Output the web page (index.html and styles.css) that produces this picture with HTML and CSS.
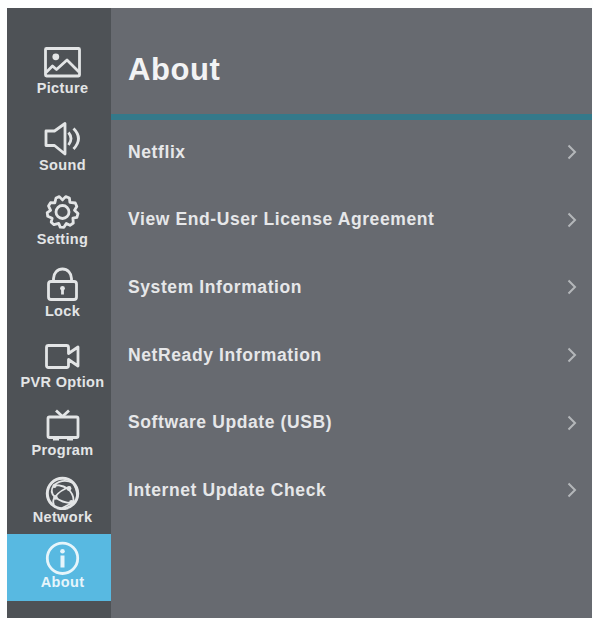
FILE: index.html
```html
<!DOCTYPE html>
<html lang="en">
<head>
<meta charset="utf-8">
<title>About</title>
<link rel="stylesheet" href="styles.css">
</head>
<body>
<div class="panel">
  <nav class="sidebar">
    <a class="item item-picture">
      <svg class="icon" viewBox="0 0 41 40"><rect x="3.500" y="7.500" width="34" height="27.500" rx="1"/><circle class="solid" cx="13.800" cy="15.800" r="3.400"/><path d="M4 31.500l6.500-6.500 4 3.500 10.500-9.500 12 12"/></svg>
      <span class="label">Picture</span>
    </a>
    <a class="item item-sound">
      <svg class="icon" viewBox="0 0 41 40"><path d="M4 13h8.500l10.500-7.500v30.500l-10.500-8.500H4z"/><path d="M26.500 14.500q5 6 0 12.500M31.500 10.500q10 10 0 20.500"/></svg>
      <span class="label">Sound</span>
    </a>
    <a class="item item-setting">
      <svg class="icon" viewBox="0 0 41 40"><circle cx="20.500" cy="20" r="6.500"/><path d="M17.300 4.600 L20.500 7.900 L23.700 4.600 L27.400 6 L27.900 10.300 L33.300 11 L34.800 14.500 L32.500 18.300 L36 21.600 L34.900 25.300 L30.900 26.200 L31.300 31 L28 33.300 L24.300 31.400 L21.900 35.300 L18.200 35.100 L16.700 31.400 L12 32.700 L9.200 30.200 L10.200 26.200 L5.700 24.300 L5.200 20.600 L8.600 18.300 L6.500 13.900 L8.500 10.700 L12.800 10.900 L14 6z"/></svg>
      <span class="label">Setting</span>
    </a>
    <a class="item item-lock">
      <svg class="icon" viewBox="0 0 41 40"><rect x="6.500" y="17.500" width="28" height="18" rx="2.500"/><path d="M11.500 17v-2.500a9 9.500 0 0 1 18 0v2.500"/><circle class="solid" cx="20.500" cy="24.300" r="2.400"/><path d="M20.500 24v6.500"/></svg>
      <span class="label">Lock</span>
    </a>
    <a class="item item-pvr">
      <svg class="icon" viewBox="0 0 41 40"><path d="M6.500 10.500h18q2 0 2 2v6l9.500-6.500v19l-9.500-6.500v6q0 2-2 2h-18q-2 0-2-2v-18q0-2 2-2z"/></svg>
      <span class="label">PVR Option</span>
    </a>
    <a class="item item-program">
      <svg class="icon" viewBox="0 0 41 40"><rect x="6" y="14" width="30" height="20.500" rx="1.500"/><path d="M14 7.500l6.500 6 6.500-6M11 36h6M25 36h6"/></svg>
      <span class="label">Program</span>
    </a>
    <a class="item item-network">
      <svg class="icon icon-fine" viewBox="0 0 41 40"><circle cx="20.500" cy="23.500" r="15.200" stroke-width="3"/><path d="M12 15Q21 8 31 13M12 15Q23 15 28 21Q33 27 31 34M12 15Q7 22 13 27Q20 33 30 33M28 17Q18 20 13 27Q10 31 12 35M31 13Q35 19 35 25M30 33Q24 36 20 38"/><circle class="solid" cx="12.500" cy="16" r="2"/><circle class="solid" cx="27" cy="18.500" r="2.400"/><circle class="solid" cx="13.500" cy="27.500" r="2.200"/><circle class="solid" cx="29.500" cy="32.500" r="2.400"/></svg>
      <span class="label">Network</span>
    </a>
    <a class="item item-about active">
      <svg class="icon" viewBox="0 0 41 40"><circle cx="20.500" cy="23.300" r="15.200"/><circle class="solid" cx="20.500" cy="16.200" r="2.300"/><path d="M20.500 20.500v12" stroke-width="4"/></svg>
      <span class="label">About</span>
    </a>
  </nav>
  <main class="content">
    <header class="header"><h1 class="title">About</h1></header>
    <ul class="list">
      <li class="row"><span>Netflix</span><svg class="chevron" viewBox="0 0 10 16"><path d="M1.500 1.500L8 8l-6.500 6.500"/></svg></li>
      <li class="row"><span>View End-User License Agreement</span><svg class="chevron" viewBox="0 0 10 16"><path d="M1.500 1.500L8 8l-6.500 6.500"/></svg></li>
      <li class="row"><span>System Information</span><svg class="chevron" viewBox="0 0 10 16"><path d="M1.500 1.500L8 8l-6.500 6.500"/></svg></li>
      <li class="row"><span>NetReady Information</span><svg class="chevron" viewBox="0 0 10 16"><path d="M1.500 1.500L8 8l-6.500 6.500"/></svg></li>
      <li class="row"><span>Software Update (USB)</span><svg class="chevron" viewBox="0 0 10 16"><path d="M1.500 1.500L8 8l-6.500 6.500"/></svg></li>
      <li class="row"><span>Internet Update Check</span><svg class="chevron" viewBox="0 0 10 16"><path d="M1.500 1.500L8 8l-6.500 6.500"/></svg></li>
    </ul>
  </main>
</div>
</body>
</html>
```
FILE: styles.css
```css
* { box-sizing: border-box; }
body {
  margin: 0;
  padding: 8px 1px 0 7px;
  height: 618px;
  overflow: hidden;
  background: #fdfefe;
  font-family: "Liberation Sans", Arial, sans-serif;
  font-weight: 700;
}
.panel {
  display: flex;
  height: 610px;
  background: #676a70;
}
.sidebar {
  width: 104px;
  flex: none;
  display: flex;
  flex-direction: column;
  background: #4e5256;
}
.item {
  display: flex;
  flex-direction: column;
  align-items: center;
  justify-content: flex-end;
  padding-left: 7px;
  color: #e3e5e6;
}
.item-picture { height: 89px; }
.item-sound { height: 77px; }
.item-setting { height: 74px; }
.item-lock { height: 72px; }
.item-pvr { height: 71px; }
.item-program { height: 68px; }
.item-network { height: 75px; padding-bottom: 8px; }
.item-about { height: 67px; padding-bottom: 10px; }
.active { background: #58b9e1; color: #e6f5fb; }
.icon {
  width: 41px;
  height: 40px;
  flex: none;
  fill: none;
  stroke: currentColor;
  stroke-width: 2.8;
  stroke-linejoin: round;
}
.icon-fine { stroke-width: 1.8; }
.solid { fill: currentColor; stroke: none; }
.label {
  padding-bottom: 2px;
  font-size: 14.5px;
  line-height: 14px;
  letter-spacing: 0.35px;
  white-space: nowrap;
}
.content { flex: 1; }
.header {
  height: 112px;
  padding: 0 17px;
  display: flex;
  align-items: center;
  border-bottom: 6px solid #34798a;
}
.title {
  margin: 0;
  padding-top: 18px;
  font-size: 31px;
  line-height: 34px;
  letter-spacing: 0.6px;
  color: #f2f3f4;
}
.list { margin: 0; padding: 0; list-style: none; }
.row {
  display: flex;
  align-items: center;
  justify-content: space-between;
  height: 67.6px;
  padding: 0 15px 3px 17px;
  font-size: 17.5px;
  letter-spacing: 0.6px;
  color: #e6e7e9;
}
.chevron {
  width: 10px;
  height: 16px;
  fill: none;
  stroke: #b4b7ba;
  stroke-width: 2;
}
```
